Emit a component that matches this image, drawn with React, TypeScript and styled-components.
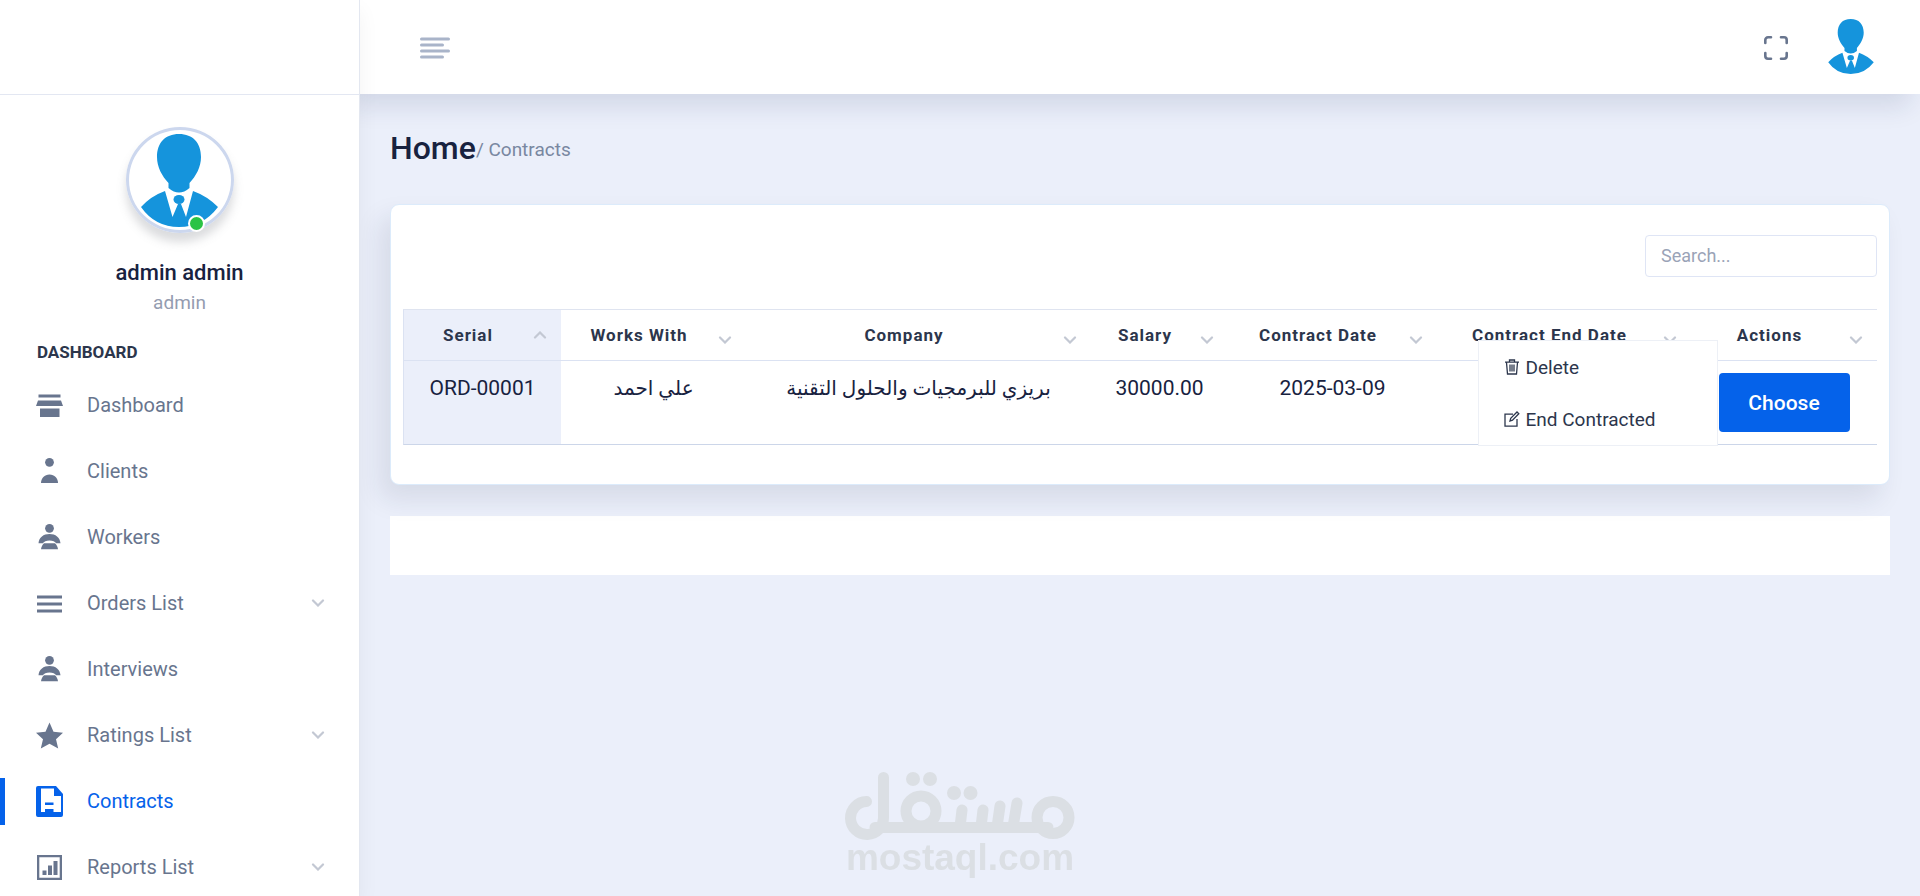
import React from 'react';
import styled, { createGlobalStyle } from 'styled-components';

const GlobalStyle = createGlobalStyle`
  *, *::before, *::after { box-sizing: border-box; }
  body {
    margin: 0;
    background: #ebeffa;
    color: #18223f;
    font-family: Roboto, "Noto Sans", "DejaVu Sans", sans-serif;
    font-size: 20px;
  }
  button, input { font-family: inherit; }
`;

const Shell = styled.div`
  display: flex;
  min-height: 100vh;
`;

const Sidebar = styled.aside`
  position: sticky;
  top: 0;
  z-index: 3;
  flex: 0 0 360px;
  height: 100vh;
  overflow: hidden;
  background: #fff;
  border-right: 1px solid #e3e7f0;
  box-shadow: 0 10px 20px rgba(42, 26, 31, 0.05);
`;

const Brand = styled.div`
  height: 95px;
  border-bottom: 1px solid #e3e7f2;
`;

const Profile = styled.section`
  display: flex;
  flex-direction: column;
  align-items: center;
  padding: 32px 0 22px;
`;

const AvatarRing = styled.div`
  position: relative;
  display: flex;
  justify-content: center;
  width: 108px;
  height: 106px;
  margin-bottom: 25px;
  padding-top: 4px;
  border: 3px solid #ccd7ee;
  border-radius: 50%;
  box-shadow: 0 9px 10px rgba(110, 115, 125, 0.25);
`;

const OnlineDot = styled.span`
  position: absolute;
  right: 26px;
  bottom: -2px;
  width: 17px;
  height: 17px;
  border: 2px solid #fff;
  border-radius: 50%;
  background: #2bc345;
`;

const UserName = styled.h4`
  margin: 0;
  font-size: 22px;
  font-weight: 500;
  line-height: 30px;
`;

const UserRole = styled.span`
  color: #949cb0;
  font-size: 19px;
  line-height: 30px;
`;

const MenuHeading = styled.h3`
  margin: 0 0 8px;
  padding-left: 37px;
  color: #2c364c;
  font-size: 17px;
  font-weight: 700;
  line-height: 24px;
`;

const MenuList = styled.ul`
  margin: 0;
  padding: 0;
  list-style: none;
`;

const MenuItem = styled.li<{ $active?: boolean }>`
  display: flex;
  align-items: center;
  height: 66px;
  &::before {
    content: "";
    width: 5px;
    height: 47px;
    background: ${(p) => (p.$active ? '#0562ea' : 'transparent')};
  }
`;

const MenuLink = styled.a<{ $active?: boolean }>`
  display: flex;
  flex: 1;
  align-items: center;
  gap: 24px;
  padding: 0 34px 0 31px;
  color: ${(p) => (p.$active ? '#0562ea' : '#68758e')};
  text-decoration: none;
`;

const MenuLabel = styled.span`
  flex: 1;
  line-height: 30px;
`;

const Content = styled.div`
  flex: 1;
  min-width: 0;
`;

const TopBar = styled.header`
  position: relative;
  display: flex;
  align-items: center;
  height: 94px;
  padding: 2px 46px 0 60px;
  background: #fff;
  box-shadow: -10px 12px 24px rgba(25, 42, 90, 0.12);
`;

const IconButton = styled.button`
  display: flex;
  padding: 0;
  border: 0;
  background: none;
  cursor: pointer;
`;

const AccountButton = styled(IconButton)`
  padding-bottom: 3px;
`;

const Spacer = styled.div`
  flex: 1;
`;

const TopActions = styled.div`
  display: flex;
  align-items: center;
  gap: 39px;
`;

const Main = styled.main`
  padding: 34px 30px;
`;

const Breadcrumb = styled.nav`
  display: flex;
  align-items: center;
  height: 40px;
  margin-bottom: 36px;
`;

const PageTitle = styled.h1`
  margin: 0;
  font-size: 32px;
  font-weight: 500;
  line-height: 40px;
`;

const Crumb = styled.span`
  padding-top: 4px;
  color: #7987a1;
  font-size: 19px;
  line-height: 30px;
  white-space: pre;
`;

const Card = styled.section`
  position: relative;
  padding: 30px 12px 39px;
  border: 1px solid #dcebfb;
  border-radius: 9px;
  background: #fff;
  box-shadow: -10px 14px 26px rgba(25, 42, 70, 0.1);
`;

const SearchRow = styled.div`
  display: flex;
  justify-content: flex-end;
  margin-bottom: 32px;
`;

const SearchInput = styled.input`
  width: 232px;
  height: 42px;
  padding: 0 15px 2px;
  border: 1px solid #dfe5f5;
  border-radius: 4px;
  font-size: 18px;
  &::placeholder { color: #9aa3b7; }
`;

const Table = styled.table`
  width: 100%;
  table-layout: fixed;
  border-spacing: 0;
`;

const HeadCell = styled.th<{ $sorted?: boolean }>`
  padding: 0;
  border-top: 1px solid #dfe4f0;
  border-bottom: 1px solid #dbe2f2;
  border-left: ${(p) => (p.$sorted ? '1px solid #dbe2f2' : '0')};
  background: ${(p) => (p.$sorted ? '#ebeffa' : '#fff')};
`;

const SortButton = styled.button`
  display: flex;
  align-items: center;
  width: 100%;
  height: 50px;
  padding: 0 14px 0 0;
  border: 0;
  background: none;
  color: #2c364c;
  font-size: 17px;
  font-weight: 700;
  letter-spacing: 1px;
  cursor: pointer;
`;

const SortLabel = styled.span`
  flex: 1;
  text-align: center;
  white-space: nowrap;
`;

const SortMark = styled.span<{ $sorted?: boolean }>`
  display: flex;
  margin-left: 1px;
  padding-top: ${(p) => (p.$sorted ? '0' : '10px')};
`;

const Cell = styled.td<{ $sorted?: boolean }>`
  padding: 12px 0;
  border-bottom: 1px solid #ccd6e9;
  border-left: ${(p) => (p.$sorted ? '1px solid #dbe2f2' : '0')};
  background: ${(p) => (p.$sorted ? '#ebeffa' : '#fff')};
  font-size: 21px;
  line-height: 30px;
  text-align: center;
  vertical-align: top;
  white-space: nowrap;
  &:lang(ar) { font-size: 20px; }
`;

const ActionBox = styled.div`
  position: relative;
  display: inline-flex;
  vertical-align: top;
`;

const ChooseButton = styled.button`
  width: 131px;
  height: 59px;
  border: 0;
  border-radius: 4px;
  background: #0562ea;
  color: #fff;
  font-size: 21px;
  font-weight: 500;
  cursor: pointer;
`;

const DropMenu = styled.div`
  position: absolute;
  top: -33px;
  right: calc(100% + 1px);
  z-index: 2;
  width: 240px;
  border: 1px solid #edf0f6;
  background: #fff;
`;

const DropItem = styled.button`
  display: flex;
  align-items: center;
  gap: 6px;
  width: 100%;
  height: 52px;
  padding: 0 25px;
  border: 0;
  background: none;
  color: #2c364c;
  font-size: 19px;
  cursor: pointer;
`;

const FooterPanel = styled.footer`
  height: 59px;
  margin-top: 31px;
  background: #fff;
`;

const Watermark = styled.div`
  position: fixed;
  bottom: 20px;
  left: 50%;
  z-index: 1;
  width: 230px;
  margin-left: -115px;
  color: #dbdfe4;
  font: bold 37px/36px "Liberation Sans", Arial, sans-serif;
  text-align: center;
`;

const WatermarkLogo = styled.svg`
  display: block;
`;

const Person = ({ width, height }: { width: number; height: number }) => (
  <svg width={width} height={height} viewBox="0 0 77 93" fill="#1594dc" aria-hidden="true">
    <path d="M38 0C24 0 16 9 16 23c0 10 5 19 11.500 26v5q10.500 9 21 0v-5C55 42 60 33 60 23 60 9 52 0 38 0z" />
    <path d="M0 73Q10 62 24 57L31.500 83 37 70h3l5 13L52 57q14 5 25 16Q62 93 38 93 14 93 0 73z" />
    <ellipse cx="38" cy="65.500" rx="5.500" ry="4.500" />
  </svg>
);

const iconShapes: Record<string, React.ReactNode> = {
  store: <path d="M2.500 2.500h22v3h-22zM2 8.500h23l2 5.500H0zM4 16.500h19.500V25H4z" />,
  person: (
    <>
      <circle cx="13.500" cy="4.300" r="4.400" />
      <path d="M5 25c0-4.500 3.500-8.500 8.500-8.500S22 20.500 22 25z" />
    </>
  ),
  worker: (
    <>
      <circle cx="13.500" cy="4.300" r="4.400" />
      <path d="M2.500 19.300C3 13.300 7.500 10 13.500 10S24 13.300 24.500 19.300h-4.300c-1-1.700-3.500-2.800-6.700-2.800S7.800 17.600 6.800 19.300z" />
      <path d="M5 25.300c.3-2.500 1.300-4.500 3-6h11c1.700 1.500 2.700 3.500 3 6z" />
    </>
  ),
  lines: <path d="M1 5.500h25v3H1zM1 12.500h25v3H1zM1 19.500h25v3H1z" />,
  star: <path d="M13.500.500l4 9.300 9.500 1-7 6.500 2.200 9.200-8.700-4.800-8.700 4.800L7 17.300l-7-6.500 9.500-1z" />,
  contract: (
    <>
      <path
        fillRule="evenodd"
        d="M2-2h18l7 8v21a2 2 0 0 1-2 2H2a2 2 0 0 1-2-2V0a2 2 0 0 1 2-2zM5 .500V24h20V8h-7V.500z"
      />
      <path d="M9 14.500h8.500v2.500H9zM9 21h8.500v4H9z" />
    </>
  ),
  chart: (
    <>
      <path fillRule="evenodd" d="M1 1h25v25H1zM3.300 3.300v20.400h20.400V3.300z" />
      <path d="M6.500 16.500h4V21h-4zM12 11.500h4V21h-4zM17.500 7h4v14h-4z" />
    </>
  ),
};

const MenuIcon = ({ name }: { name: string }) => (
  <svg width="27" height="27" viewBox="0 0 27 27" fill="currentColor" overflow="visible" aria-hidden="true">
    {iconShapes[name]}
  </svg>
);

const Chevron = ({ up }: { up?: boolean }) => (
  <svg width="14" height="8" viewBox="0 0 14 8" fill="none" stroke="#c3c8d3" strokeWidth="2.200" strokeLinecap="round" aria-hidden="true">
    <path d={up ? 'M2 6.500 7 1.500l5 5' : 'M2 1.500l5 5 5-5'} />
  </svg>
);

const menu = [
  { label: 'Dashboard', icon: 'store' },
  { label: 'Clients', icon: 'person' },
  { label: 'Workers', icon: 'worker' },
  { label: 'Orders List', icon: 'lines', expandable: true },
  { label: 'Interviews', icon: 'worker' },
  { label: 'Ratings List', icon: 'star', expandable: true },
  { label: 'Contracts', icon: 'contract', active: true },
  { label: 'Reports List', icon: 'chart', expandable: true },
];

const columns = [
  { title: 'Serial', width: 158, sorted: true },
  { title: 'Works With', width: 185 },
  { title: 'Company', width: 345 },
  { title: 'Salary', width: 137 },
  { title: 'Contract Date', width: 209 },
  { title: 'Contract End Date', width: 254 },
  { title: 'Actions', width: 186 },
];

export default function App() {
  return (
    <>
      <GlobalStyle />
      <Shell>
        <Sidebar>
          <Brand />
          <Profile>
            <AvatarRing>
              <Person width={77} height={93} />
              <OnlineDot />
            </AvatarRing>
            <UserName>admin admin</UserName>
            <UserRole>admin</UserRole>
          </Profile>
          <MenuHeading>DASHBOARD</MenuHeading>
          <MenuList>
            {menu.map((item) => (
              <MenuItem key={item.label} $active={item.active}>
                <MenuLink href="#" $active={item.active}>
                  <MenuIcon name={item.icon} />
                  <MenuLabel>{item.label}</MenuLabel>
                  {item.expandable && <Chevron />}
                </MenuLink>
              </MenuItem>
            ))}
          </MenuList>
        </Sidebar>

        <Content>
          <TopBar>
            <IconButton type="button" aria-label="Toggle menu">
              <svg width="30" height="22" viewBox="0 0 30 22" stroke="#a9b4c9" strokeWidth="3" strokeLinecap="round">
                <path d="M1.500 2h27M1.500 8h21M1.500 14h27M1.500 20h21" />
              </svg>
            </IconButton>
            <Spacer />
            <TopActions>
              <IconButton type="button" aria-label="Full screen">
                <svg width="26" height="26" viewBox="0 0 26 26" fill="none" stroke="#68758e" strokeWidth="2.600" strokeLinecap="round">
                  <path d="M2.300 8V5a2.700 2.700 0 0 1 2.700-2.700h3M18 2.300h3A2.700 2.700 0 0 1 23.700 5v3M23.700 18v3a2.700 2.700 0 0 1-2.700 2.700h-3M8 23.700H5A2.700 2.700 0 0 1 2.300 21v-3" />
                </svg>
              </IconButton>
              <AccountButton type="button" aria-label="Account">
                <Person width={46} height={55} />
              </AccountButton>
            </TopActions>
          </TopBar>

          <Main>
            <Breadcrumb aria-label="Breadcrumb">
              <PageTitle>Home</PageTitle>
              <Crumb>/ Contracts</Crumb>
            </Breadcrumb>

            <Card>
              <SearchRow>
                <SearchInput type="search" placeholder="Search..." aria-label="Search" />
              </SearchRow>
              <Table>
                <colgroup>
                  {columns.map((c) => (
                    <col key={c.title} width={c.width} />
                  ))}
                </colgroup>
                <thead>
                  <tr>
                    {columns.map((c) => (
                      <HeadCell key={c.title} $sorted={c.sorted} scope="col">
                        <SortButton type="button">
                          <SortLabel>{c.title}</SortLabel>
                          <SortMark $sorted={c.sorted}>
                            <Chevron up={c.sorted} />
                          </SortMark>
                        </SortButton>
                      </HeadCell>
                    ))}
                  </tr>
                </thead>
                <tbody>
                  <tr>
                    <Cell $sorted>ORD-00001</Cell>
                    <Cell lang="ar" dir="rtl">علي احمد</Cell>
                    <Cell lang="ar" dir="rtl">بريزي للبرمجيات والحلول التقنية</Cell>
                    <Cell>30000.00</Cell>
                    <Cell>2025-03-09</Cell>
                    <Cell />
                    <Cell>
                      <ActionBox>
                        <ChooseButton type="button">Choose</ChooseButton>
                        <DropMenu>
                          <DropItem type="button">
                            <svg width="16" height="16" viewBox="0 0 16 16" fill="none" stroke="currentColor" strokeWidth="1.300" aria-hidden="true">
                              <path d="M1 3.200h14M5.500 3V1h5v2M2.500 3.500l1 11.500h9l1-11.500M6 5.500v7M8 5.500v7M10 5.500v7" />
                            </svg>
                            Delete
                          </DropItem>
                          <DropItem type="button">
                            <svg width="16" height="16" viewBox="0 0 16 16" fill="none" stroke="currentColor" strokeWidth="1.300" aria-hidden="true">
                              <path d="M9 3.200H1v12h12V8M6 10l.7-2.700L13 1l1.800 1.800L8.500 9.200z" />
                            </svg>
                            End Contracted
                          </DropItem>
                        </DropMenu>
                      </ActionBox>
                    </Cell>
                  </tr>
                </tbody>
              </Table>
            </Card>
            <FooterPanel />
          </Main>
        </Content>
      </Shell>

      <Watermark>
        <WatermarkLogo width="230" height="68" viewBox="0 0 230 68" fill="none" stroke="currentColor" strokeWidth="11" strokeLinecap="round" aria-hidden="true">
          <path d="M21.500 29.500A16.500 16.500 0 1 0 38.500 45.500V5.500M30 55.500h173M117 38l-2 17M138 38l-2 17M155 34l-3 21M172 31l-4 24" />
          <circle cx="76" cy="39" r="15" />
          <circle cx="208" cy="45.500" r="16" />
          <g fill="currentColor" stroke="none">
            <circle cx="68" cy="7" r="7" />
            <circle cx="85" cy="7" r="7" />
            <circle cx="109" cy="21" r="7" />
            <circle cx="125.500" cy="21" r="7" />
          </g>
        </WatermarkLogo>
        mostaql.com
      </Watermark>
    </>
  );
}
